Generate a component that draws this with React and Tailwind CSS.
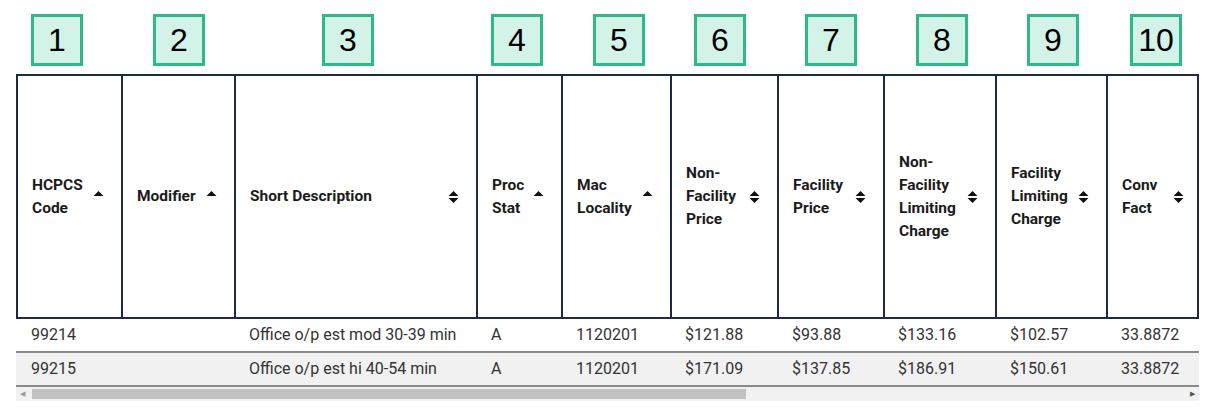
const cols = [
  { w: 105, off: 15, n: "1", head: ["HCPCS", "Code"], sort: "up" },
  { w: 113, off: 32, n: "2", head: ["Modifier"], sort: "up" },
  { w: 242, off: 88, n: "3", head: ["Short Description"], sort: "both" },
  { w: 85, off: 15, n: "4", head: ["Proc", "Stat"], sort: "up" },
  { w: 109, off: 32, n: "5", head: ["Mac", "Locality"], sort: "up" },
  { w: 107, off: 24, n: "6", head: ["Non-", "Facility", "Price"], sort: "both" },
  { w: 106, off: 28, n: "7", head: ["Facility", "Price"], sort: "both" },
  { w: 112, off: 33, n: "8", head: ["Non-", "Facility", "Limiting", "Charge"], sort: "both" },
  { w: 111, off: 32, n: "9", head: ["Facility", "Limiting", "Charge"], sort: "both" },
  { w: 93, off: 24, n: "10", head: ["Conv", "Fact"], sort: "both" },
];

const rows = [
  ["99214", "", "Office o/p est mod 30-39 min", "A", "1120201", "$121.88", "$93.88", "$133.16", "$102.57", "33.8872"],
  ["99215", "", "Office o/p est hi 40-54 min", "A", "1120201", "$171.09", "$137.85", "$186.91", "$150.61", "33.8872"],
];

function SortIcon({ kind }) {
  return (
    <svg width="11" height="14" viewBox="0 0 11 14" className="shrink-0">
      <path d="M0.5 6 L5.5 1 L10.5 6 Z" fill="#111" />
      {kind === "both" && <path d="M0.5 8 L5.5 13 L10.5 8 Z" fill="#111" />}
    </svg>
  );
}

export default function App() {
  const template = cols.map((c) => c.w + "px").join(" ");
  return (
    <div className="bg-white w-[1216px] h-[409px] pl-4" style={{ fontFamily: "Roboto, 'Liberation Sans', sans-serif" }}>
      <div className="grid pt-[14px] h-[74px]" style={{ gridTemplateColumns: template }}>
        {cols.map((c) => (
          <div key={c.n} style={{ paddingLeft: c.off }}>
            <div className="w-[52px] h-[52px] border-[3px] border-[#2fb98a] bg-[#d4f3e8] flex items-center justify-center text-[32px] text-black" style={{ fontFamily: "'Liberation Sans', Arial, sans-serif" }}>
              {c.n}
            </div>
          </div>
        ))}
      </div>
      <div className="w-[1183px]">
        <div className="grid border-2 border-[#1c2a48] h-[245px]" style={{ gridTemplateColumns: template }}>
          {cols.map((c, i) => (
            <div key={c.n} className={`flex items-center justify-between pl-[14px] pr-[17px] ${i < cols.length - 1 ? "border-r-2 border-[#1c2a48]" : ""}`}>
              <div className="text-[15.5px] font-bold leading-[23px] text-[#1b1b1b]">
                {c.head.map((h) => (
                  <div key={h}>{h}</div>
                ))}
              </div>
              <SortIcon kind={c.sort} />
            </div>
          ))}
        </div>
        {rows.map((r, ri) => (
          <div key={ri} className={`grid h-[34px] border-b-2 border-[#8a8a8a] ${ri === 1 ? "bg-[#f1f1f1]" : ""}`} style={{ gridTemplateColumns: template }}>
            {r.map((v, i) => (
              <div key={i} className="flex items-center pl-[15px] text-[16px] text-[#333]">{v}</div>
            ))}
          </div>
        ))}
        <div className="h-[14px] bg-[#f1f1f1] flex items-center relative">
          <span className="absolute left-[4px] text-[7px] text-[#999]">◀</span>
          <div className="ml-[16px] w-[714px] h-[10px] bg-[#c1c1c1]" />
          <span className="absolute right-[4px] text-[7px] text-[#555]">▶</span>
        </div>
      </div>
    </div>
  );
}
